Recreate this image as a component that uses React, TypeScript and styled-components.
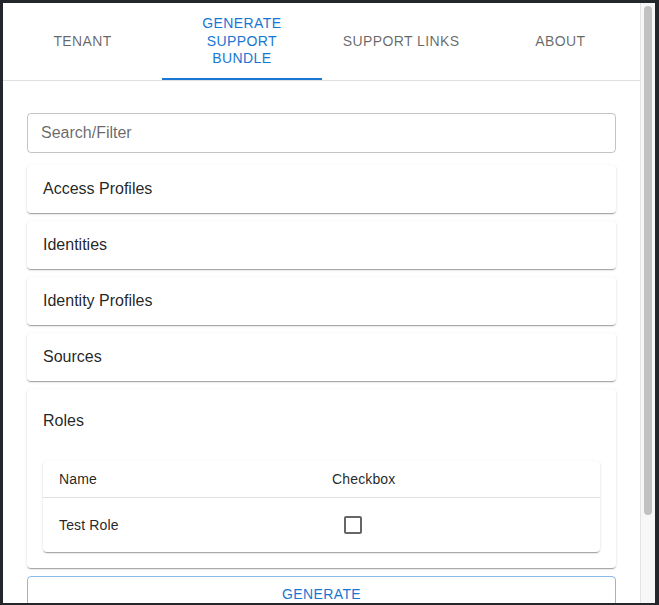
import React from "react";
import styled, { createGlobalStyle } from "styled-components";

const GlobalStyle = createGlobalStyle`
  html, body { margin: 0; padding: 0; }
  body {
    background: #23262a;
    font-family: "Liberation Sans", Arial, Helvetica, sans-serif;
    -webkit-font-smoothing: antialiased;
  }
  * { box-sizing: border-box; }
`;

const Frame = styled.div`
  width: 659px;
  height: 605px;
  padding: 3px 4px 2px 3px;
  display: flex;
`;

const Popup = styled.div`
  flex: 1;
  display: flex;
  background: #ffffff;
  overflow: hidden;
`;

const Main = styled.div`
  flex: 1;
  display: flex;
  flex-direction: column;
  overflow: hidden;
  min-width: 0;
`;

const TabBar = styled.div`
  display: flex;
  border-bottom: 1px solid #e0e0e0;
  flex-shrink: 0;
`;

const Tab = styled.div<{ $active?: boolean }>`
  flex: 1;
  display: flex;
  align-items: center;
  justify-content: center;
  text-align: center;
  padding: 12px 16px 10px;
  min-height: 72px;
  font-size: 14px;
  line-height: 1.25;
  letter-spacing: 0.02857em;
  text-transform: uppercase;
  color: ${(p) => (p.$active ? "#1976d2" : "rgba(0,0,0,0.6)")};
  border-bottom: 2px solid ${(p) => (p.$active ? "#1976d2" : "transparent")};
`;

const Content = styled.div`
  display: flex;
  flex-direction: column;
  padding: 32px 24px 0;
`;

const SearchBox = styled.div`
  height: 40px;
  border: 1px solid rgba(0, 0, 0, 0.23);
  border-radius: 4px;
  padding: 0 13px;
  display: flex;
  align-items: center;
  font-size: 16px;
  color: rgba(0, 0, 0, 0.6);
  margin-bottom: 12px;
`;

const CardList = styled.div`
  display: flex;
  flex-direction: column;
  gap: 8px;
`;

const paperShadow = `0px 2px 1px -1px rgba(0,0,0,0.2), 0px 1px 1px 0px rgba(0,0,0,0.14), 0px 1px 3px 0px rgba(0,0,0,0.12)`;

const Card = styled.div`
  background: #fff;
  border-radius: 4px;
  box-shadow: ${paperShadow};
`;

const CardHeader = styled.div<{ $expanded?: boolean }>`
  height: ${(p) => (p.$expanded ? "64px" : "48px")};
  padding: 0 16px;
  display: flex;
  align-items: center;
  font-size: 16px;
  color: rgba(0, 0, 0, 0.87);
`;

const CardBody = styled.div`
  padding: 8px 16px 16px;
`;

const TablePaper = styled.div`
  background: #fff;
  border-radius: 4px;
  box-shadow: ${paperShadow};
  overflow: hidden;
`;

const TableRow = styled.div<{ $head?: boolean }>`
  display: grid;
  grid-template-columns: 273px 1fr;
  border-bottom: ${(p) => (p.$head ? "1px solid #e0e0e0" : "none")};
`;

const Cell = styled.div`
  padding: 6px 16px;
  font-size: 14px;
  line-height: 24px;
  letter-spacing: 0.01071em;
  color: rgba(0, 0, 0, 0.87);
  display: flex;
  align-items: center;
`;

const CheckboxWrap = styled.span`
  display: inline-flex;
  padding: 9px;
  color: rgba(0, 0, 0, 0.6);
  svg {
    width: 24px;
    height: 24px;
    display: block;
    fill: currentColor;
  }
`;

const GenerateButton = styled.div`
  margin-top: 8px;
  height: 36px;
  flex-shrink: 0;
  border: 1px solid rgba(25, 118, 210, 0.5);
  border-radius: 4px;
  display: flex;
  align-items: center;
  justify-content: center;
  font-size: 14px;
  letter-spacing: 0.02857em;
  text-transform: uppercase;
  color: #1976d2;
`;

const ScrollTrack = styled.div`
  width: 15px;
  flex-shrink: 0;
  background: #f7f7f7;
  border-left: 1px solid #e4e4e4;
  padding: 3px 0 0 3px;
`;

const ScrollThumb = styled.div`
  width: 8px;
  height: 509px;
  border-radius: 4px;
  background: #c1c1c1;
`;

const tabs = ["Tenant", "Generate Support Bundle", "Support Links", "About"];
const collapsed = ["Access Profiles", "Identities", "Identity Profiles", "Sources"];

export default function App() {
  return (
    <>
      <GlobalStyle />
      <Frame>
        <Popup>
          <Main>
            <TabBar>
              {tabs.map((t, i) => (
                <Tab key={t} $active={i === 1}>
                  {t}
                </Tab>
              ))}
            </TabBar>
            <Content>
              <SearchBox>Search/Filter</SearchBox>
              <CardList>
                {collapsed.map((c) => (
                  <Card key={c}>
                    <CardHeader>{c}</CardHeader>
                  </Card>
                ))}
                <Card>
                  <CardHeader $expanded>Roles</CardHeader>
                  <CardBody>
                    <TablePaper>
                      <TableRow $head>
                        <Cell>Name</Cell>
                        <Cell>Checkbox</Cell>
                      </TableRow>
                      <TableRow>
                        <Cell>Test Role</Cell>
                        <Cell>
                          <CheckboxWrap>
                            <svg viewBox="0 0 24 24">
                              <path d="M19 5v14H5V5h14m0-2H5c-1.1 0-2 .9-2 2v14c0 1.1.9 2 2 2h14c1.1 0 2-.9 2-2V5c0-1.1-.9-2-2-2z" />
                            </svg>
                          </CheckboxWrap>
                        </Cell>
                      </TableRow>
                    </TablePaper>
                  </CardBody>
                </Card>
              </CardList>
              <GenerateButton>Generate</GenerateButton>
            </Content>
          </Main>
          <ScrollTrack>
            <ScrollThumb />
          </ScrollTrack>
        </Popup>
      </Frame>
    </>
  );
}
